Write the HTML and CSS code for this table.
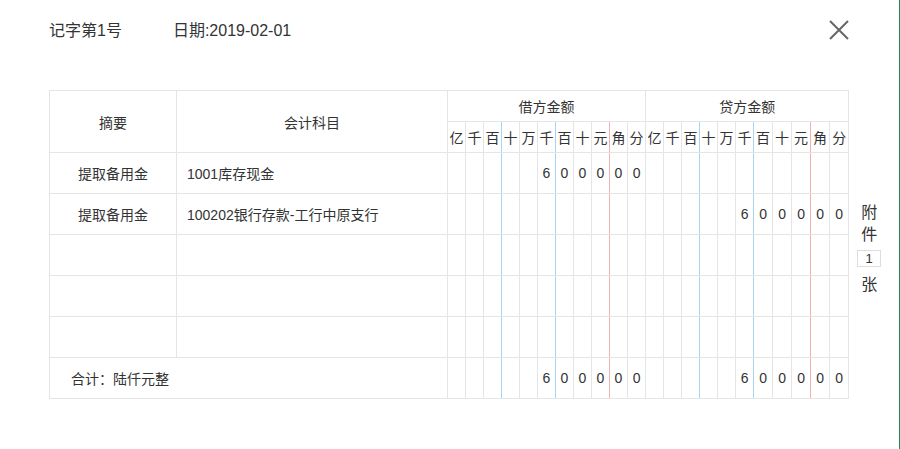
FILE: index.html
```html
<!DOCTYPE html>
<html lang="zh">
<head>
<meta charset="utf-8">
<title>记账凭证</title>
<link rel="stylesheet" href="styles.css">
</head>
<body>
<div class="page">
  <div class="top">
    <div class="title"><span>记字第1号</span><span>日期:2019-02-01</span></div>
    <svg class="close" viewBox="0 0 20 20"><path d="M1 1L19 19M19 1L1 19"/></svg>
  </div>
  <div class="main">
    <table class="voucher">
      <colgroup>
        <col class="c-sum"><col class="c-acc">
        <col class="d"><col class="d"><col class="d"><col class="d"><col class="d"><col class="d"><col class="d"><col class="d"><col class="d"><col class="d"><col class="d">
        <col class="d"><col class="d"><col class="d"><col class="d"><col class="d"><col class="d"><col class="e"><col class="e"><col class="e"><col class="e"><col class="e">
      </colgroup>
      <thead>
        <tr class="h1">
          <th rowspan="2">摘要</th>
          <th rowspan="2">会计科目</th>
          <th colspan="11">借方金额</th>
          <th colspan="11">贷方金额</th>
        </tr>
        <tr class="h2">
          <th>亿</th><th>千</th><th class="b">百</th><th>十</th><th>万</th><th class="b">千</th><th>百</th><th>十</th><th class="r">元</th><th>角</th><th>分</th>
          <th>亿</th><th>千</th><th class="b">百</th><th>十</th><th>万</th><th class="b">千</th><th>百</th><th>十</th><th class="r">元</th><th>角</th><th>分</th>
        </tr>
      </thead>
      <tbody>
        <tr>
          <td>提取备用金</td><td class="acc">1001库存现金</td>
          <td></td><td></td><td class="b"></td><td></td><td></td><td class="b">6</td><td>0</td><td>0</td><td class="r">0</td><td>0</td><td>0</td>
          <td></td><td></td><td class="b"></td><td></td><td></td><td class="b"></td><td></td><td></td><td class="r"></td><td></td><td></td>
        </tr>
        <tr>
          <td>提取备用金</td><td class="acc">100202银行存款-工行中原支行</td>
          <td></td><td></td><td class="b"></td><td></td><td></td><td class="b"></td><td></td><td></td><td class="r"></td><td></td><td></td>
          <td></td><td></td><td class="b"></td><td></td><td></td><td class="b">6</td><td>0</td><td>0</td><td class="r">0</td><td>0</td><td>0</td>
        </tr>
        <tr>
          <td></td><td></td>
          <td></td><td></td><td class="b"></td><td></td><td></td><td class="b"></td><td></td><td></td><td class="r"></td><td></td><td></td>
          <td></td><td></td><td class="b"></td><td></td><td></td><td class="b"></td><td></td><td></td><td class="r"></td><td></td><td></td>
        </tr>
        <tr>
          <td></td><td></td>
          <td></td><td></td><td class="b"></td><td></td><td></td><td class="b"></td><td></td><td></td><td class="r"></td><td></td><td></td>
          <td></td><td></td><td class="b"></td><td></td><td></td><td class="b"></td><td></td><td></td><td class="r"></td><td></td><td></td>
        </tr>
        <tr>
          <td></td><td></td>
          <td></td><td></td><td class="b"></td><td></td><td></td><td class="b"></td><td></td><td></td><td class="r"></td><td></td><td></td>
          <td></td><td></td><td class="b"></td><td></td><td></td><td class="b"></td><td></td><td></td><td class="r"></td><td></td><td></td>
        </tr>
        <tr>
          <td colspan="2" class="total">合计：陆仟元整</td>
          <td></td><td></td><td class="b"></td><td></td><td></td><td class="b">6</td><td>0</td><td>0</td><td class="r">0</td><td>0</td><td>0</td>
          <td></td><td></td><td class="b"></td><td></td><td></td><td class="b">6</td><td>0</td><td>0</td><td class="r">0</td><td>0</td><td>0</td>
        </tr>
      </tbody>
    </table>
    <div class="attach">
      <span>附</span>
      <span>件</span>
      <span class="count">1</span>
      <span>张</span>
    </div>
  </div>
</div>
</body>
</html>
```

FILE: styles.css
```css
html, body {
  margin: 0;
  padding: 0;
  background: #fff;
}

body {
  font-family: "Liberation Sans", "Noto Sans CJK SC", sans-serif;
  color: #333;
}

.page {
  width: 900px;
  height: 449px;
  box-sizing: border-box;
  border-right: 1px solid #22895a;
  padding: 20px 0 0 49px;
}

.top {
  display: flex;
  justify-content: space-between;
  align-items: center;
  width: 800px;
  height: 20px;
}

.title {
  display: flex;
  gap: 51px;
  font-size: 16px;
  line-height: 20px;
  padding-top: 2px;
}

.close {
  width: 20px;
  height: 20px;
  fill: none;
  stroke: #666;
  stroke-width: 2;
}

.main {
  display: flex;
  align-items: flex-start;
  margin-top: 50px;
}

.voucher {
  border-collapse: collapse;
  table-layout: fixed;
  width: 800px;
  font-size: 14px;
}

.c-sum { width: 127px; }
.c-acc { width: 271px; }
.d { width: 18px; }
.e { width: 19px; }

.voucher th,
.voucher td {
  border: 1px solid #e5e5e5;
  padding: 0;
  font-weight: normal;
  text-align: center;
  color: #333;
  white-space: nowrap;
  overflow: hidden;
}

.voucher .b { border-right-color: #a9d5f2; }
.voucher .b + td,
.voucher .b + th { border-left-color: #a9d5f2; }
.voucher .r { border-right-color: #f2b0b3; }
.voucher .r + td,
.voucher .r + th { border-left-color: #f2b0b3; }

.h1 { height: 31px; }
.h2 { height: 31px; }
.voucher tbody tr { height: 41px; }

.voucher td.acc {
  text-align: left;
  padding-left: 10px;
}

.voucher td.total {
  text-align: left;
  padding-left: 21px;
}

.attach {
  display: flex;
  flex-direction: column;
  align-items: center;
  width: 24px;
  margin-left: 8px;
  margin-top: 112px;
  font-size: 16px;
  line-height: 22px;
  color: #333;
}

.attach .count {
  box-sizing: border-box;
  width: 24px;
  height: 17px;
  border: 1px solid #ddd;
  font-size: 13px;
  line-height: 15px;
  text-align: center;
  margin: 4px 0 7px;
}
```
